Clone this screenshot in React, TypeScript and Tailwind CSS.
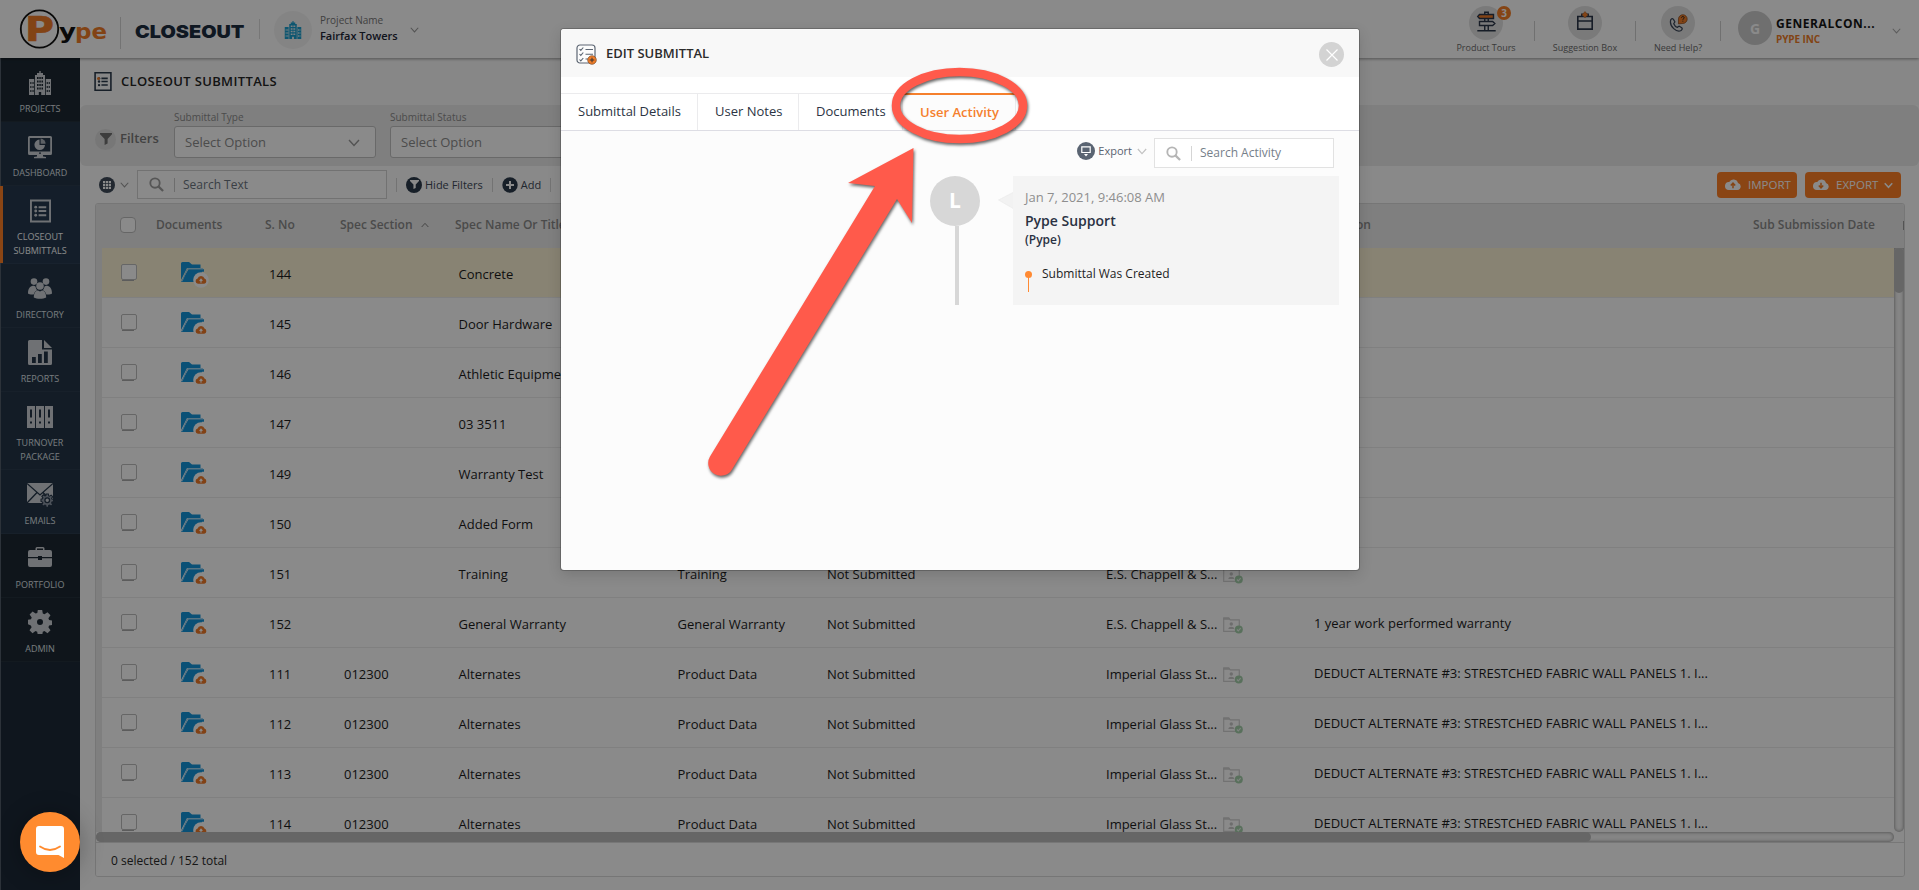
import React from "react";

type IconProps = { className?: string };

const Chevron = ({ className = "" }: IconProps) => (
  <svg viewBox="0 0 12 8" className={"shrink-0 " + className} fill="none" stroke="currentColor" strokeWidth="1.4">
    <path d="M1 1l5 5.500L11 1" />
  </svg>
);

const Search = ({ className = "" }: IconProps) => (
  <svg viewBox="0 0 16 16" className={className} fill="none" stroke="currentColor">
    <circle cx="6.4" cy="6.4" r="5" strokeWidth="2" />
    <path d="M10 10l5 5" strokeWidth="2.4" />
  </svg>
);

const Building = ({ className = "" }: IconProps) => (
  <svg viewBox="0 0 24 24" className={className} fill="currentColor" fillRule="evenodd">
    <path d="M11.3 0h1.4v2H15v2h2v20h-3.800v-3h-2.400v3H7V4h2V2h2.300zM9 6v2h1.600V6zm2.300 0v2h1.500V6zm2.200 0v2H15V6zM9 9.500v2h1.600v-2zm2.300 0v2h1.500v-2zm2.200 0v2H15v-2zM9 13v2h1.600v-2zm2.300 0v2h1.500v-2zm2.200 0v2H15v-2zM9 16.500v2h1.600v-2zm2.300 0v2h1.500v-2zm2.200 0v2H15v-2z" />
    <path d="M1 8h5.200v16H1zm1.300 3v2h1.100v-2zm2.200 0v2h1.100v-2zm-2.200 4v2h1.100v-2zm2.200 0v2h1.100v-2zm-2.200 4v2h1.100v-2zm2.200 0v2h1.100v-2z" />
    <path d="M17.800 8H23v16h-5.200zm.9 3v2h1.100v-2zm2 0v2h1.100v-2zm-2 4v2h1.100v-2zm2 0v2h1.100v-2zm-2 4v2h1.100v-2zm2 0v2h1.100v-2z" />
  </svg>
);

const Dashboard = ({ className = "" }: IconProps) => (
  <svg viewBox="0 0 24 24" className={className} fill="currentColor" fillRule="evenodd">
    <path d="M1.500 1h21Q24 1 24 2.500v16q0 1.500-1.500 1.500h-21Q0 20 0 18.500v-16Q0 1 1.500 1zM1.800 3v13.500h20.400V3zM11 17.600v1.200h2v-1.200z" />
    <path d="M9 20h6v1.500l3 .5v1.200H6V22l3-.5z" />
    <path d="M11.500 4.500v5.500h5.500a5.300 5.300 0 1 1-5.500-5.500z" />
    <path d="M12.600 3.600A5 5 0 0 1 17.600 8.800h-5z" opacity=".8" />
  </svg>
);

const ListBox = ({ className = "" }: IconProps) => (
  <svg viewBox="0 0 22 24" className={className} fill="currentColor">
    <path d="M0 0h22v24H0zM2 2v20h18V2z" fillRule="evenodd" />
    <path d="M9 7h8v2H9zM9 11h8v2H9zM9 15.500h8v2H9z" />
    <circle cx="6" cy="8" r="1.500" />
    <circle cx="6" cy="12" r="1.500" />
    <circle cx="6" cy="16.500" r="1.500" />
  </svg>
);

const People = ({ className = "" }: IconProps) => (
  <svg viewBox="0 0 24 21" className={className} fill="currentColor">
    <circle cx="6" cy="3.600" r="3.300" />
    <circle cx="18" cy="3.600" r="3.300" />
    <path d="M0 15.500c0-5 2-7.500 5-7.800 1 0 2 .3 2.600 1 .2 1.500.8 2.600 1.600 3.500-2 1-3 2.500-3.500 4.300C3 16.700 1 16.300 0 15.500zM24 15.500c0-5-2-7.500-5-7.800-1 0-2 .3-2.600 1-.2 1.500-.8 2.600-1.600 3.500 2 1 3 2.500 3.500 4.300 2.700.2 4.700-.2 5.700-1z" />
    <circle cx="12" cy="8" r="3.800" />
    <path d="M5.800 19.500c0-4.500 2-7 4.200-7l2 1 2-1c2.200 0 4.200 2.500 4.200 7-3 1.800-9.400 1.800-12.400 0z" />
  </svg>
);

const Report = ({ className = "" }: IconProps) => (
  <svg viewBox="0 0 24 25" className={className} fill="currentColor" fillRule="evenodd">
    <path d="M1.500 0H14v9.500h10v14q0 1.500-1.500 1.500h-21Q0 25 0 23.500v-22Q0 0 1.500 0zM4 17v6h3.800v-6zm6-3v9h3.800v-9zm6-2.500V23h3.800V11.500z" />
    <path d="M16 0l8 8h-8z" />
  </svg>
);

const Binders = ({ className = "" }: IconProps) => (
  <svg viewBox="0 0 26 22" className={className} fill="currentColor" fillRule="evenodd">
    <path d="M0 0h8v22H0zM3 3.500v8h2v-8zm0 12v2h2v-2zM9 0h8v22H9zm3 3.500v8h2v-8zm0 12v2h2v-2zM18 0h8v22h-8zm3 3.500v8h2v-8zm0 12v2h2v-2z" />
  </svg>
);

const Gear = ({ className = "" }: IconProps) => (
  <svg viewBox="0 0 24 24" className={className} fill="currentColor" fillRule="evenodd">
    <path d="M9.800 0h4.400l.6 3.600 1.700.7 3-2.100 3 3-2.100 3 .7 1.700 3.500.6v4.400l-3.500.6-.7 1.700 2.100 3-3 3-3-2.100-1.700.7-.6 3.500H9.800l-.6-3.500-1.700-.7-3 2.100-3-3 2.100-3-.7-1.700L0 14.200V9.800l3-.6.7-1.700-2.100-3 3-3 3 2.100 1.700-.7zM12 9a3 3 0 1 0 0 6 3 3 0 0 0 0-6z" />
  </svg>
);

const Mail = ({ className = "" }: IconProps) => (
  <svg viewBox="0 0 26 24" className={className}>
    <path d="M0 0h26v20H0z" fill="currentColor" />
    <path d="M0 .5l13 11.500L26 .5M0 20L10 9.500M26 20L16 9.500" fill="none" stroke="#233447" strokeWidth="1.300" />
    <g transform="translate(14 11) scale(.52)" color="#233447">
      <path d="M9.800 0h4.400l.6 3.600 1.700.7 3-2.100 3 3-2.100 3 .7 1.700 3.500.6v4.400l-3.500.6-.7 1.700 2.100 3-3 3-3-2.100-1.700.7-.6 3.500H9.800l-.6-3.500-1.700-.7-3 2.100-3-3 2.100-3-.7-1.700L0 14.200V9.800l3-.6.7-1.700-2.100-3 3-3 3 2.100 1.700-.7z" fill="#8d97a5" stroke="#233447" strokeWidth="2" />
      <circle cx="12" cy="12" r="4.500" fill="#c7ccd3" stroke="#233447" strokeWidth="2.500" />
    </g>
  </svg>
);

const Briefcase = ({ className = "" }: IconProps) => (
  <svg viewBox="0 0 24 20" className={className} fill="currentColor" fillRule="evenodd">
    <path d="M7.500 3V1.500Q7.500 0 9 0h6q1.500 0 1.500 1.500V3H22q2 0 2 2v5H14V9h-4v1H0V5q0-2 2-2zM9 3h6V1.500H9zM0 11.200h10V13h4v-1.800h10V18q0 2-2 2H2q-2 0-2-2z" />
  </svg>
);

const FolderUp = ({ className = "" }: IconProps) => (
  <svg viewBox="0 0 28 27" className={className}>
    <path d="M0 1.500Q0 0 1.500 0H8l3 2.500h8.500V6H6L0 18z" fill="#1394db" />
    <path d="M7.500 7.300H23v2.500H21L19 20H0z" fill="#1394db" />
    <path d="M6.500 6.700h15.500M6.500 6.700L1 19.500" stroke="#8ccdf1" strokeWidth="1" fill="none" />
    <circle cx="20" cy="18" r="7.800" fill="#fff" />
    <path d="M17 21.800h6.200a2.700 2.700 0 0 0 .3-5.200 3.600 3.600 0 0 0-6.900-.1 2.700 2.700 0 0 0 .4 5.300z" fill="#f07a28" />
    <path d="M20 20.800v-3.600m-1.400 1.700l1.400-1.700 1.400 1.700" stroke="#fff" strokeWidth="1.100" fill="none" />
  </svg>
);

const Verified = ({ className = "" }: IconProps) => (
  <svg viewBox="0 0 20 17" className={className}>
    <path d="M.7 14.300V1.200h5l1.500 1.600h9.100v11.500z" fill="none" stroke="#d2d2d2" strokeWidth="1.200" />
    <path d="M.2.5h6l1.500 2.300H.2z" fill="#d2d2d2" />
    <circle cx="8.300" cy="7" r="1.700" fill="#cacaca" />
    <path d="M5.300 12c0-3 6-3 6 0z" fill="#cacaca" />
    <circle cx="15.800" cy="12.400" r="4" fill="#a5cfab" />
    <path d="M13.900 12.500l1.400 1.400 2.400-2.800" fill="none" stroke="#e8f4ea" strokeWidth="1.100" />
  </svg>
);

const Cloud = ({ up }: { up?: boolean }) => (
  <svg viewBox="0 0 16 12" className="-mt-0.5 h-3 w-4">
    <path d="M3.800 12h8.600a3.500 3.500 0 0 0 .6-6.900A4.700 4.700 0 0 0 4.200 4 4 4 0 0 0 3.800 12z" fill="#fff" />
    <path d={up ? "M8 10.200V5.500M5.800 7.600L8 5.200l2.200 2.400" : "M8 4.800v4.700M5.800 7.600L8 10l2.200-2.400"} stroke="#f57f25" strokeWidth="1.500" fill="none" />
  </svg>
);

const Funnel = ({ className = "" }: IconProps) => (
  <svg viewBox="0 0 12 12" className={className} fill="currentColor">
    <path d="M0 0h12v1.200L7.600 6v4.500L4.600 12V6L0 1.200z" />
  </svg>
);

const nav = [
  { icon: <Building className="h-6 w-6" />, lines: ["PROJECTS"], cls: "h-16 bg-[#1c2833]" },
  { icon: <Dashboard className="h-6 w-6" />, lines: ["DASHBOARD"], cls: "h-16 bg-[#233447]" },
  { icon: <ListBox className="h-6 w-[21px]" />, lines: ["CLOSEOUT", "SUBMITTALS"], cls: "h-[78px] bg-[#25394f] text-white", active: true },
  { icon: <People className="h-[21px] w-6" />, lines: ["DIRECTORY"], cls: "h-16 bg-[#233447]" },
  { icon: <Report className="h-[25px] w-6" />, lines: ["REPORTS"], cls: "h-16 bg-[#233447]" },
  { icon: <Binders className="h-[22px] w-[26px]" />, lines: ["TURNOVER", "PACKAGE"], cls: "h-[78px] bg-[#233447]" },
  { icon: <Mail className="h-6 w-[26px]" />, lines: ["EMAILS"], cls: "h-16 bg-[#233447]" },
  { icon: <Briefcase className="mb-[3px] h-5 w-6" />, lines: ["PORTFOLIO"], cls: "h-16 bg-[#1c2833]" },
  { icon: <Gear className="mb-0.5 h-6 w-6" />, lines: ["ADMIN"], cls: "h-16 bg-[#1c2833]" },
];

const deduct = "DEDUCT ALTERNATE #3: STRESTCHED FABRIC WALL PANELS 1. I...";
const glass = "Imperial Glass St...";
const es = "E.S. Chappell & S...";

const rows = [
  { no: "144", spec: "", name: "Concrete", type: "", status: "", sub: "", desc: "" },
  { no: "145", spec: "", name: "Door Hardware", type: "", status: "", sub: "", desc: "" },
  { no: "146", spec: "", name: "Athletic Equipment", type: "", status: "", sub: "", desc: "" },
  { no: "147", spec: "", name: "03 3511", type: "", status: "", sub: "", desc: "" },
  { no: "149", spec: "", name: "Warranty Test", type: "", status: "", sub: "", desc: "" },
  { no: "150", spec: "", name: "Added Form", type: "", status: "", sub: "", desc: "" },
  { no: "151", spec: "", name: "Training", type: "Training", status: "Not Submitted", sub: es, desc: "" },
  { no: "152", spec: "", name: "General Warranty", type: "General Warranty", status: "Not Submitted", sub: es, desc: "1 year work performed warranty" },
  { no: "111", spec: "012300", name: "Alternates", type: "Product Data", status: "Not Submitted", sub: glass, desc: deduct },
  { no: "112", spec: "012300", name: "Alternates", type: "Product Data", status: "Not Submitted", sub: glass, desc: deduct },
  { no: "113", spec: "012300", name: "Alternates", type: "Product Data", status: "Not Submitted", sub: glass, desc: deduct },
  { no: "114", spec: "012300", name: "Alternates", type: "Product Data", status: "Not Submitted", sub: glass, desc: deduct },
];

function Logo() {
  return (
    <svg viewBox="0 0 92 44" className="ml-[18px] h-11 w-[92px] shrink-0">
      <circle cx="21.500" cy="22" r="18.700" fill="none" stroke="#111" strokeWidth="1.800" />
      <g fontFamily="DejaVu Sans" fontWeight="bold">
        <text x="7" y="33.500" fontSize="33" fill="#f07d28" stroke="#f07d28" strokeWidth=".6" textLength="29" lengthAdjust="spacingAndGlyphs">P</text>
        <text x="41" y="31.500" fontSize="22" fill="#111" textLength="17" lengthAdjust="spacingAndGlyphs">y</text>
        <text x="57" y="31.500" fontSize="22" fill="#f07d28" textLength="32" lengthAdjust="spacingAndGlyphs">pe</text>
      </g>
    </svg>
  );
}

function HeaderAction({ label, width, children }: { label: string; width: string; children: React.ReactNode }) {
  return (
    <div className={"flex h-full shrink-0 flex-col items-center pt-1.5 " + width}>
      <div className="relative flex h-[34px] w-[34px] shrink-0 items-center justify-center rounded-full bg-[#e2e2e2]">{children}</div>
      <span className="mt-px text-[9px] leading-[14px] text-[#6c6c6c]">{label}</span>
    </div>
  );
}

function Header() {
  return (
    <header className="relative z-10 flex h-[58px] shrink-0 items-center bg-white shadow-[0_1px_3px_rgba(0,0,0,0.4)]">
      <Logo />
      <div className="ml-[10px] mt-2 h-8 w-px bg-[#d5d5d5]" />
      <svg viewBox="0 0 124 24" className="mt-[5px] ml-[14px] h-6 w-[124px] shrink-0">
        <text x="0" y="18" fontFamily="Inter" fontWeight="900" fontSize="17.500" fill="#1c2d40" textLength="109.500" lengthAdjust="spacingAndGlyphs">CLOSEOUT</text>
      </svg>
      <div className="h-5 w-px bg-[#dcdcdc]" />
      <div className="ml-[14px] mt-px flex h-[38px] w-[38px] items-center justify-center rounded-full bg-[#f4f4f4]">
        <Building className="h-[18px] w-[18px] text-[#1a9fd0]" />
      </div>
      <div className="ml-2 mt-[-3px] w-[90px] whitespace-nowrap">
        <div className="text-[10px] leading-[15px] text-[#777]">Project Name</div>
        <div className="text-[11px] leading-[15px] font-semibold text-[#1c2537]">Fairfax Towers</div>
      </div>
      <Chevron className="mt-px h-[6px] w-[9px] text-[#999]" />
      <div className="flex-1" />
      <HeaderAction label="Product Tours" width="w-[96px]">
        <svg viewBox="0 0 24 24" className="-mt-1 h-[21px] w-[21px]" fill="none" stroke="#2b3648" strokeWidth="1.600">
          <path d="M10 22V1.500h4V22M1.500 22.500h21" />
          <path d="M4 4h16v4.500H4L2 6.300z" fill="#f07d28" />
          <path d="M4 12h15l2.500 2.300L19 16.500H4z" fill="#e2e2e2" />
        </svg>
        <span className="absolute top-0 left-[28px] flex h-[14px] w-[14px] items-center justify-center rounded-full bg-[#f57f25] text-[10px] font-bold text-white">3</span>
      </HeaderAction>
      <div className="mt-1 h-5 w-px bg-[#cfcfcf]" />
      <HeaderAction label="Suggestion Box" width="w-[100px]">
        <svg viewBox="0 0 20 22" className="-mt-1 h-5 w-[18px]" fill="none" stroke="#2b3648" strokeWidth="1.800">
          <path d="M2 6h16v14H2zM2 11h16M6.500 6V3.500h7V6" />
          <path d="M10 .5l3.200 3.500L10 7.500 6.800 4z" fill="#f07d28" stroke="#a35b24" strokeWidth=".6" />
        </svg>
      </HeaderAction>
      <div className="mt-1 h-5 w-px bg-[#cfcfcf]" />
      <HeaderAction label="Need Help?" width="w-[84px]">
        <svg viewBox="0 0 22 22" className="h-5 w-5" fill="none" stroke="#3b4658" strokeWidth="1.400">
          <path d="M3 7.500c1-1.500 2-1.500 3-.5l1.500 2.500c.3 1-1 1.500-1.200 2.300.8 2 2.200 3.400 4 4 .8-.3 1.300-1.500 2.300-1.200l2.500 1.600c1 1 .5 2-.7 3C10 22 1 15 3 7.500z" />
          <path d="M11.500 12V6.500a4.800 4.800 0 1 1 4.800 5z" fill="#f07d28" stroke="#8a4a1f" strokeWidth=".8" />
          <path d="M14.800 5.300c0-2 3.200-1.800 3 0 0 1-1.500 1-1.500 2.200M16.300 8.500v1" stroke="#222" strokeWidth="1" />
        </svg>
      </HeaderAction>
      <div className="mt-1 h-5 w-px bg-[#cfcfcf]" />
      <div className="ml-[17px] mt-[-2px] flex h-[34px] w-[34px] items-center justify-center rounded-full bg-[#cecece] pt-px text-[14px] font-bold text-white">G</div>
      <div className="ml-1 mt-1 w-[116px] whitespace-nowrap">
        <div className="text-[12px] leading-[17px] font-bold tracking-[0.55px] text-[#161616]">GENERALCON...</div>
        <div className="text-[10px] leading-[15px] font-bold tracking-[-0.1px] text-[#f07d28]">PYPE INC</div>
      </div>
      <Chevron className="mt-[3px] mr-[18px] h-[6px] w-[9px] text-[#aaa]" />
    </header>
  );
}

function Sidebar() {
  return (
    <nav className="flex w-20 shrink-0 flex-col border-l border-[#525d69] bg-[#1c2a38]">
      {nav.map((n) => (
        <div key={n.lines[0]} className={"relative flex flex-col items-center border-b border-white/[0.04] text-[#dfe2e6] " + n.cls}>
          {n.active && <div className="absolute top-0 -left-px h-full w-[3px] bg-[#ff8026]" />}
          <div className="flex h-[49px] w-full items-center justify-center pr-px text-[#cdd1d6]">{n.icon}</div>
          <div className="-mt-[5px] pr-px text-center text-[9px] leading-[14px]">
            {n.lines.map((l) => (
              <div key={l}>{l}</div>
            ))}
          </div>
        </div>
      ))}
    </nav>
  );
}

function Select({ label }: { label: string }) {
  return (
    <div className="mr-[14px] w-[202px] pt-1">
      <div className="text-[10px] leading-4 text-[#8c8c8c]">{label}</div>
      <div className="mt-px flex h-8 items-center justify-between rounded-[3px] border border-[#c2c2c2] bg-white pt-px pr-[15px] pl-2.5">
        <span className="text-[13px] text-[#8c8c8c]">Select Option</span>
        <Chevron className="h-2 w-3 text-[#999]" />
      </div>
    </div>
  );
}

const Sep = () => <div className="h-[14px] w-px bg-[#d4d4d4]" />;

const cols = "grid grid-cols-[60px_107px_75px_114.5px_219px_149.5px_279px_208px_1fr]";

function TableArea() {
  return (
    <div className="mr-[14px] ml-[15px] flex h-[674px] flex-col overflow-hidden rounded-[3px] border border-[#dadada]">
      <div className="flex h-11 shrink-0 items-center overflow-hidden bg-[#ebebeb] pb-0.5 text-[12px] font-semibold whitespace-nowrap text-[#8a8a8a]">
        <div className="ml-6 h-4 w-4 shrink-0 rounded-sm border border-[#bdbdbd] bg-white" />
        <div className="ml-5 w-[109px] shrink-0">Documents</div>
        <div className="w-[75px] shrink-0">S. No</div>
        <div className="w-[81px] shrink-0">Spec Section</div>
        <Chevron className="h-[6px] w-2 rotate-180 text-[#777]" />
        <div className="ml-[26px] w-[120px] shrink-0">Spec Name Or Title</div>
        <div className="ml-[650px] w-[146px] shrink-0 text-right">Item Description</div>
        <div className="ml-[382px] w-[150px] shrink-0">Sub Submission Date</div>
        <div className="h-[9px] w-px shrink-0 bg-[#9a9a9a]" />
      </div>
      <div className="flex h-[584px] shrink-0">
        <div className="w-1.5 shrink-0 bg-[#ebebeb]" />
        <div className="h-full flex-1 overflow-hidden">
          {rows.map((r, i) => (
            <div
              key={r.no}
              className={cols + " h-[50px] items-center border-b border-[#ececec] pt-[5px] text-[13px] whitespace-nowrap text-[#1c1c1c] " + (i === 0 ? "bg-[#fbf2d4]" : "bg-white")}
            >
              <div className="-mt-[5px] ml-[19px]">
                <div className="h-4 w-4 rounded-[2px] border border-[#bcbcbc] bg-white" />
                <div className="ml-px h-px w-3 bg-[#aaa]" />
              </div>
              <FolderUp className="ml-[19px] h-[27px] w-7 self-start mt-[9px]" />
              <div>{r.no}</div>
              <div>{r.spec}</div>
              <div>{r.name}</div>
              <div>{r.type}</div>
              <div>{r.status}</div>
              <div className="flex items-center">
                <span className="w-[117px]">{r.sub}</span>
                {r.sub && <Verified className="h-[17px] w-5" />}
              </div>
              <div className="-mt-0.5">{r.desc}</div>
            </div>
          ))}
        </div>
        <div className="w-2.5 shrink-0 rounded-b-[5px] bg-[#f6f6f6] shadow-[inset_0_0_3px_1px_rgba(0,0,0,0.3)]">
          <div className="h-[45px] rounded-[5px] bg-[#bdbdbd]" />
        </div>
      </div>
      <div className="mr-2.5 h-2.5 shrink-0 rounded-[5px] bg-[#f6f6f6] shadow-[inset_0_0_3px_1px_rgba(0,0,0,0.3)]">
        <div className="h-full w-[1495px] rounded-[5px] bg-[#bdbdbd]" />
      </div>
      <div className="flex flex-1 items-center border-t border-[#dcdcdc] bg-white pt-0.5 pl-[15px] text-[12px] text-[#2a2a2a]">0 selected / 152 total</div>
    </div>
  );
}

function Main() {
  return (
    <main className="flex min-w-0 flex-1 flex-col bg-[#fdfdfd]">
      <div className="flex h-[47px] shrink-0 items-center bg-[#fafafa] pl-[14px]">
        <div className="relative">
          <ListBox className="h-[19px] w-[18px] text-[#2b3a4b]" />
          <div className="absolute top-[5px] left-[3px] h-[3px] w-[3px] rounded-full bg-[#f07d28]" />
        </div>
        <h1 className="ml-[9px] text-[13px] font-semibold tracking-[0.35px] text-[#262626]">CLOSEOUT SUBMITTALS</h1>
      </div>
      <div className="flex h-[61px] shrink-0 rounded-md bg-[#eaeaea] pl-[15px]">
        <div className="flex w-[79px] items-center pt-[7px]">
          <div className="flex h-[21px] w-[21px] items-center justify-center rounded-full bg-[#dcdcdc]">
            <Funnel className="h-3 w-3 text-[#727272]" />
          </div>
          <span className="ml-1 text-[13px] font-semibold text-[#7a7a7a]">Filters</span>
        </div>
        <Select label="Submittal Type" />
        <Select label="Submittal Status" />
      </div>
      <div className="flex h-[37px] shrink-0 items-center pl-[19px] text-[11px] text-[#3d4957]">
        <div className="flex h-4 w-4 items-center justify-center rounded-full bg-[#3f4b5a]">
          <svg viewBox="0 0 8 8" className="h-2 w-2" fill="#fff">
            <path d="M0 0h2.200v2.200H0zM2.900 0h2.200v2.200H2.900zM5.800 0H8v2.200H5.800zM0 2.900h2.200v2.200H0zM2.900 2.900h2.200v2.200H2.900zM5.800 2.900H8v2.200H5.800zM0 5.800h2.200V8H0zM2.900 5.800h2.200V8H2.900zM5.800 5.800H8V8H5.800z" />
          </svg>
        </div>
        <Chevron className="mt-px ml-[5px] h-[6px] w-[9px] text-[#999]" />
        <div className="ml-2 flex h-[29px] w-[250px] items-center border border-[#d3d3d3] bg-white">
          <Search className="ml-[11px] h-[15px] w-[15px] text-[#a0a0a0]" />
          <div className="ml-2.5 h-[14px] w-px bg-[#c9c9c9]" />
          <span className="ml-2 text-[12px] text-[#6b7580]">Search Text</span>
        </div>
        <div className="ml-[9px]"><Sep /></div>
        <div className="ml-[9px] flex h-4 w-4 items-center justify-center rounded-full bg-[#2c3a4a]">
          <Funnel className="h-[9px] w-[9px] text-white" />
        </div>
        <span className="ml-[3px] pt-px">Hide Filters</span>
        <div className="ml-[9px]"><Sep /></div>
        <svg viewBox="0 0 16 16" className="ml-[9px] h-4 w-4">
          <circle cx="8" cy="8" r="7.700" fill="#2c3a4a" />
          <path d="M8 4v8M4 8h8" stroke="#fff" strokeWidth="2" />
        </svg>
        <span className="ml-[3px] pt-px">Add</span>
        <div className="ml-[9px]"><Sep /></div>
        <div className="flex-1" />
        <div className="flex h-[26px] w-20 items-center rounded bg-[#ff8026] pt-px pl-2 text-[11.500px] text-white">
          <Cloud up />
          <span className="ml-[7px]">IMPORT</span>
        </div>
        <div className="mr-[18px] ml-2 flex h-[26px] w-24 items-center rounded bg-[#ff8026] pt-px pl-2 text-[11.500px] text-white">
          <Cloud />
          <span className="ml-[7px]">EXPORT</span>
          <Chevron className="ml-[6px] h-[7px] w-[9px] stroke-2" />
        </div>
      </div>
      <TableArea />
    </main>
  );
}

function Modal() {
  return (
    <section className="absolute top-[29px] left-[561px] flex h-[541px] w-[798px] flex-col overflow-hidden rounded-[3px] bg-[#fcfcfc] shadow-[0_0_0_1px_rgba(0,0,0,0.2),0_4px_14px_rgba(0,0,0,0.15)]">
      <div className="flex h-12 shrink-0 items-center bg-[#f8f8f8] pr-[15px] pl-[15px]">
        <svg viewBox="0 0 21 21" className="mt-0.5 h-[21px] w-[21px]" fill="none" stroke="#5c6572">
          <rect x="1" y="1" width="18" height="18" rx="3" strokeWidth="1.200" fill="#fcfcfc" />
          <path d="M3.500 5l1.300 1.400L7.300 3.500M3.500 10l1.300 1.400 2.500-2.900M3.500 15.500l1.300 1.400 2.500-2.900M9.500 5.500H17M9.500 10.300H17M9.500 15h3" strokeWidth="1.100" />
          <circle cx="16" cy="16" r="4.300" fill="#f07d28" stroke="#7a4a28" strokeWidth=".7" />
          <path d="M16 13.700v4.600M13.700 16h4.600" stroke="#333" strokeWidth="1" />
        </svg>
        <h2 className="ml-[9px] flex-1 pt-0.5 text-[13px] font-semibold text-[#2c2c2c]">EDIT SUBMITTAL</h2>
        <button className="mt-[3px] flex h-[25px] w-[25px] items-center justify-center rounded-full bg-[#d3d3d3]">
          <svg viewBox="0 0 12 12" className="h-3 w-3" stroke="#fff" strokeWidth="1.200">
            <path d="M.5.5l11 11M11.500.5l-11 11" />
          </svg>
        </button>
      </div>
      <div className="h-[54px] shrink-0 border-b border-[#dddde4] bg-white pt-4">
        <div className="flex h-[37px] text-[13px] text-[#2c3444]">
          <div className="flex w-[137px] items-center border-t border-r border-[#ebebed] pl-[17px]">Submittal Details</div>
          <div className="flex w-[101px] items-center border-t border-r border-[#ebebed] pl-[17px]">User Notes</div>
          <div className="flex w-[104px] items-center border-t border-r border-[#ebebed] pl-[17px]">Documents</div>
          <div className="flex w-[113px] items-center border-t-2 border-r border-t-[#f5802d] border-r-[#ebebed] bg-[#fcfcfc] pt-px pl-[17px] font-semibold text-[#f5802d]">User Activity</div>
        </div>
      </div>
      <div className="mb-px flex h-11 shrink-0 items-center justify-end pr-[25px] text-[#5a6370]">
        <svg viewBox="0 0 18 18" className="mb-1 h-[18px] w-[18px]">
          <circle cx="9" cy="9" r="9" fill="#5a6472" />
          <path d="M4.800 4.800h8.400v5.700H4.800z" fill="none" stroke="#fff" strokeWidth="1.200" />
          <path d="M7 12h4L9 14.600z" fill="#fff" />
        </svg>
        <span className="mb-1 ml-[3px] text-[11px]">Export</span>
        <Chevron className="mb-1 ml-[5px] h-[7px] w-2.5 text-[#c2c2c2]" />
        <div className="ml-[7px] flex h-[30px] w-[180px] items-center border border-[#e2e2e2] bg-white">
          <Search className="ml-[11px] h-[15px] w-[15px] text-[#b5b5b5]" />
          <div className="ml-2.5 h-[15px] w-px bg-[#d5d5d5]" />
          <span className="ml-2 text-[12px] text-[#76808a]">Search Activity</span>
        </div>
      </div>
      <div className="flex h-[129px] pl-[369px]">
        <div className="flex w-[50px] flex-col items-center">
          <div className="flex h-[50px] w-[50px] shrink-0 items-center justify-center rounded-full bg-[#d7d7d7] text-[21px] font-bold text-white">L</div>
          <div className="ml-1 w-1 flex-1 bg-[#d7d7d7]" />
        </div>
        <svg viewBox="0 0 16 17" className="mt-4 ml-[18px] h-[17px] w-4">
          <path d="M16 0L.5 8 16 17z" fill="#f2f2f2" />
          <path d="M16 0L.5 8 16 17" fill="none" stroke="#eaeaea" strokeWidth=".6" />
        </svg>
        <div className="-ml-px w-[326px] bg-[#f4f4f4] pl-3">
          <div className="pt-3 text-[13px] leading-[18px] text-[#8e8e8e]">Jan 7, 2021, 9:46:08 AM</div>
          <div className="mt-[5px] text-[14px] leading-[20px] font-semibold text-[#2a3142]">Pype Support</div>
          <div className="text-[12px] leading-[17px] font-semibold text-[#2a3142]">(Pype)</div>
          <div className="mt-[17px] flex text-[12px] leading-[18px] text-[#1e1e1e]">
            <svg viewBox="0 0 7 22" className="mt-[6px] mr-[10px] h-[22px] w-[7px]">
              <circle cx="3.500" cy="3.500" r="3.500" fill="#ff8a33" />
              <path d="M3.500 4v17" stroke="#ff8a33" />
            </svg>
            Submittal Was Created
          </div>
        </div>
      </div>
    </section>
  );
}

function Annotation() {
  return (
    <svg viewBox="700 60 340 430" className="absolute top-[60px] left-[700px] h-[430px] w-[340px] drop-shadow-[1px_2.5px_1.5px_rgba(0,0,0,0.6)]">
      <ellipse cx="959.500" cy="105.500" rx="63.500" ry="33.500" fill="none" stroke="#ff5a4b" strokeWidth="8.500" />
      <path d="M913.500 148L848 183l27 3L710 456.500a12.500 12.500 0 0 0 22 13L897 199l15 24z" fill="#ff5a4b" />
    </svg>
  );
}

export default function App() {
  return (
    <div className="relative flex h-[890px] w-full flex-col overflow-hidden bg-white font-['Open_Sans','Noto_Sans',sans-serif]">
      <Header />
      <div className="flex min-h-0 flex-1">
        <Sidebar />
        <Main />
      </div>
      <div className="absolute inset-0 z-20 bg-black/46" />
      <div className="absolute top-0 left-0 z-30">
        <Modal />
        <Annotation />
        <div className="absolute top-[812px] left-5 flex h-[60px] w-[60px] items-center justify-center rounded-full bg-[#ff8b2f] shadow-[0_2px_24px_rgba(0,0,0,0.3)]">
          <svg viewBox="0 0 28 32" className="h-8 w-7">
            <path d="M3 0h22q3 0 3 3v29l-5.500-3H3q-3 0-3-3V3q0-3 3-3z" fill="#fff" />
            <path d="M4 20.500q10 7 20 0" fill="none" stroke="#ff8b2f" strokeWidth="1.800" strokeLinecap="round" />
          </svg>
        </div>
      </div>
    </div>
  );
}
